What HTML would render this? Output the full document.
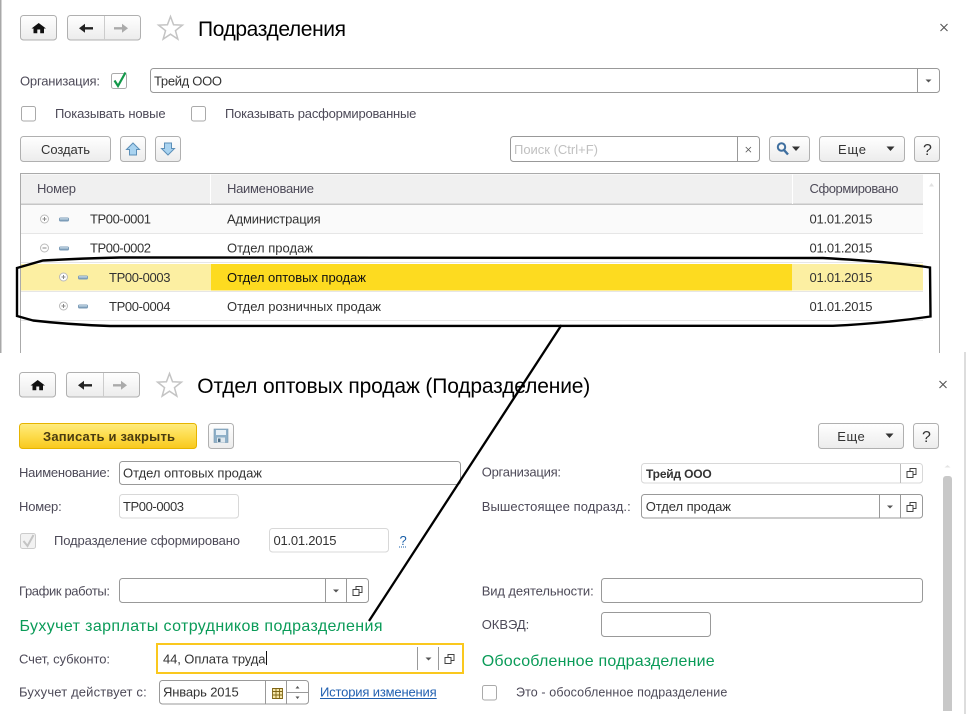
<!DOCTYPE html>
<html lang="ru"><head><meta charset="utf-8"><title>Подразделения</title>
<style>
html,body{margin:0;padding:0;background:#fff;width:966px;height:714px;overflow:hidden}
svg{display:block}
text{font-family:"Liberation Sans",Arial,sans-serif;font-size:13px;fill:#333}
.l{fill:#4d4a58}
.g{fill:#0a9b58;font-size:16px}
.t{fill:#000;font-size:21px}
.q{font-size:16px;fill:#333}
.b{stroke:#b0b0b0;fill:url(#btn)}
.i{stroke:#999;fill:#fff}
.il{stroke:#d8d8d8;fill:#fff}
.d{stroke:#999;stroke-width:1;fill:none}
</style></head><body>
<svg width="966" height="714" viewBox="0 0 966 714" xmlns="http://www.w3.org/2000/svg">
<defs>
<linearGradient id="btn" x1="0" y1="0" x2="0" y2="1"><stop offset="0" stop-color="#fff"/><stop offset="1" stop-color="#ececec"/></linearGradient>
<linearGradient id="yb" x1="0" y1="0" x2="0" y2="1"><stop offset="0" stop-color="#ffec80"/><stop offset=".5" stop-color="#fddc4c"/><stop offset="1" stop-color="#f8c81c"/></linearGradient>
<g id="home"><path d="M18.700 8L26 13.500H24V18.200H20.200V14.500H17.300V18.200H13.500V13.500H11.500Z" fill="#111"/></g>
<g id="star"><path d="M0-12.500L3.060-4.200L11.900-3.860L4.950 1.600L7.350 10.100L0 5.200L-7.350 10.100L-4.950 1.600L-11.900-3.860L-3.060-4.200Z" fill="#fff" stroke="#c4c4c4" stroke-width="1.500"/></g>
<g id="copy"><path d="M-4.500-1.500H1.500V4.500H-4.500Z" fill="none" stroke="#444"/><path d="M-1.500-4.500H4.500V1.500H1.500V-1.500H-1.500Z" fill="#fff" stroke="#444"/></g>
<path id="car" d="M-3-1.500H3L0 1.500Z" fill="#555"/>
<path id="car2" d="M-4-2H4L0 2.500Z" fill="#333"/>
<path id="x" d="M-3.500-3.500L3.500 3.500M3.500-3.500L-3.500 3.500" stroke="#555" stroke-width="1.100" fill="none"/>
<g id="dash"><rect x="0" y="-1.500" width="10" height="4" rx="1.500" fill="#7c9cb8"/><rect x="1" y="-.7" width="8" height="1.200" fill="#c9dbe8"/></g>
<g id="plus"><circle r="4" fill="#fff" stroke="#bbb"/><path d="M-2 0H2M0-2V2" stroke="#888"/></g>
<g id="minus"><circle r="4" fill="#fff" stroke="#bbb"/><path d="M-2 0H2" stroke="#888"/></g>
</defs>

<!-- window edges -->
<rect x="0" y="0" width="1.500" height="353" fill="#a8a8a8"/>
<rect x="964.500" y="352" width="1" height="362" fill="#bbb"/>

<!-- TOP TOOLBAR -->
<rect class="b" x="20.500" y="15.500" width="36" height="24.500" rx="3"/>
<use href="#home" x="20" y="15"/>
<rect class="b" x="67.500" y="15.500" width="73" height="24.500" rx="3"/>
<path d="M104.500 16V40" stroke="#ccc"/>
<path d="M79 28.300L85 23.800V27.100H93V29.500H85V32.800Z" fill="#222"/>
<path d="M128 28.300L122 23.800V27.100H114V29.500H122V32.800Z" fill="#aaa"/>
<use href="#star" x="170.500" y="29"/>
<text class="t" x="198" y="36" textLength="148">Подразделения</text>
<use href="#x" x="944" y="27.500"/>

<text class="l" x="20" y="85.500" textLength="80">Организация:</text>
<rect x="111.500" y="73.500" width="15" height="15" rx="2" fill="#fff" stroke="#aaa"/>
<path d="M114.500 80.500L118 86L125.500 72.500" fill="none" stroke="#13984a" stroke-width="2.200"/>
<rect class="i" x="150.500" y="68.500" width="789" height="24" rx="3"/>
<path class="d" d="M917.500 69V92"/>
<use href="#car" x="928.500" y="81"/>
<text x="154" y="85.500" textLength="68">Трейд ООО</text>

<rect x="21.500" y="106.500" width="14" height="14.500" rx="2" fill="#fff" stroke="#aaa"/>
<text class="l" x="55" y="118" textLength="110.600">Показывать новые</text>
<rect x="191.500" y="106.500" width="14" height="14.500" rx="2" fill="#fff" stroke="#aaa"/>
<text class="l" x="225" y="118" textLength="191.400">Показывать расформированные</text>

<rect class="b" x="20.500" y="136.500" width="90" height="25" rx="3"/>
<text x="41" y="154" textLength="49">Создать</text>
<rect class="b" x="120.500" y="136.500" width="25" height="25" rx="3"/>
<path d="M133 143L139.500 149.500H136.500V155H129.500V149.500H126.500Z" fill="#a9d3f0" stroke="#5c8fb8"/>
<rect class="b" x="155.500" y="136.500" width="25" height="25" rx="3"/>
<path d="M168 155L174.500 148.500H171.500V143H164.500V148.500H161.500Z" fill="#a9d3f0" stroke="#5c8fb8"/>

<rect class="i" x="510.500" y="136.500" width="249" height="25" rx="3"/>
<path class="d" d="M737.500 137V161"/>
<use href="#x" x="748.500" y="149.500" transform="translate(187 37.500) scale(.75)"/>
<text x="514" y="154" textLength="84" style="fill:#c0c0c0">Поиск (Ctrl+F)</text>
<rect class="b" x="769.500" y="136.500" width="40" height="25" rx="3"/>
<circle cx="781.500" cy="147" r="3.700" fill="none" stroke="#3f6f9f" stroke-width="2"/>
<path d="M784 150L788 154.500" stroke="#3f6f9f" stroke-width="2.400"/>
<use href="#car2" x="796" y="148.500"/>
<rect class="b" x="819.500" y="136.500" width="85" height="25" rx="3"/>
<text x="838" y="154" textLength="28">Еще</text>
<use href="#car2" x="890.500" y="148.500"/>
<rect class="b" x="914.500" y="136.500" width="25" height="25" rx="3"/>
<text class="q" x="923" y="155">?</text>

<!-- TABLE -->
<path d="M20.500 353V173.500H939.500V353" fill="none" stroke="#aaa"/>
<rect x="21" y="174.500" width="902" height="29" fill="#f0f0f0"/>
<rect x="21" y="203.500" width="902" height="1.500" fill="#c6c6c6"/>
<rect x="210" y="174" width="1" height="30" fill="#fff"/>
<rect x="792" y="174" width="1" height="30" fill="#fff"/>
<text class="l" x="37" y="193" textLength="39">Номер</text>
<text class="l" x="227" y="193" textLength="87">Наименование</text>
<text class="l" x="809.500" y="193" textLength="89">Сформировано</text>
<path d="M929 186.500L931.500 183L934 186.500Z" fill="#e2e2e2"/>

<rect x="21" y="205" width="902" height="28" fill="#fafafa"/>
<rect x="21" y="233" width="902" height="1" fill="#e6e6e6"/>
<rect x="21" y="262" width="902" height="1" fill="#e6e6e6"/>
<rect x="21" y="264" width="902" height="26.500" fill="#fcefa2"/>
<rect x="211" y="264" width="581" height="26.500" fill="#fddb20"/>
<rect x="21" y="291" width="902" height="1" fill="#e6e6e6"/>
<rect x="21" y="320" width="902" height="1" fill="#e6e6e6"/>

<use href="#plus" x="44.500" y="219"/><use href="#dash" x="59" y="219"/>
<use href="#minus" x="44.500" y="248"/><use href="#dash" x="59" y="248"/>
<use href="#plus" x="63.500" y="277"/><use href="#dash" x="78" y="277"/>
<use href="#plus" x="63.500" y="306"/><use href="#dash" x="78" y="306"/>

<text x="90" y="223.500" textLength="61">ТР00-0001</text>
<text x="90" y="252.500" textLength="61">ТР00-0002</text>
<text x="109" y="282" textLength="61.500">ТР00-0003</text>
<text x="109" y="311" textLength="61.500">ТР00-0004</text>
<text x="227" y="223.500" textLength="93.700">Администрация</text>
<text x="227" y="252.500" textLength="86">Отдел продаж</text>
<text x="227" y="282" textLength="139" style="fill:#111">Отдел оптовых продаж</text>
<text x="227" y="311" textLength="154">Отдел розничных продаж</text>
<text x="809.500" y="223.500" textLength="63">01.01.2015</text>
<text x="809.500" y="252.500" textLength="63">01.01.2015</text>
<text x="809.500" y="282" textLength="63">01.01.2015</text>
<text x="809.500" y="311" textLength="63">01.01.2015</text>

<!-- LOWER TOOLBAR -->
<rect class="b" x="19.500" y="372.500" width="36" height="24.500" rx="3"/>
<use href="#home" x="19" y="372"/>
<rect class="b" x="66.500" y="372.500" width="73" height="24.500" rx="3"/>
<path d="M103.500 373V397" stroke="#ccc"/>
<path d="M78 385.300L84 380.800V384.100H92V386.500H84V389.800Z" fill="#222"/>
<path d="M127 385.300L121 380.800V384.100H113V386.500H121V389.800Z" fill="#aaa"/>
<use href="#star" x="169.500" y="386"/>
<text class="t" x="197.300" y="393" textLength="393">Отдел оптовых продаж (Подразделение)</text>
<use href="#x" x="943" y="384.500"/>

<rect x="19.500" y="423.500" width="177" height="25" rx="3" fill="url(#yb)" stroke="#e6b400"/>
<text x="43" y="441" textLength="132" font-weight="bold" style="fill:#4a3c10">Записать и закрыть</text>
<rect class="b" x="208.500" y="423.500" width="25" height="25" rx="3"/>
<rect x="214" y="429" width="14" height="13.500" fill="#8fb0c8" stroke="#7597b0" stroke-width=".6"/>
<rect x="216" y="430" width="10" height="5" fill="#e8f0f6"/>
<rect x="217" y="437.500" width="8" height="5" fill="#dfe8ee"/>
<rect x="218" y="438.500" width="2.500" height="3.500" fill="#4f6f88"/>
<rect class="b" x="818.500" y="423.500" width="85" height="25" rx="3"/>
<text x="837.300" y="441" textLength="27.400">Еще</text>
<use href="#car2" x="889.500" y="435.500"/>
<rect class="b" x="913.500" y="423.500" width="25" height="25" rx="3"/>
<text class="q" x="922" y="442">?</text>

<!-- LEFT FORM -->
<text class="l" x="19" y="477" textLength="91">Наименование:</text>
<rect class="i" x="119.500" y="461.500" width="341" height="23" rx="3"/>
<text x="123" y="477.500" textLength="139">Отдел оптовых продаж</text>
<text class="l" x="19" y="511" textLength="42.700">Номер:</text>
<rect class="il" x="119.500" y="494.500" width="119" height="23.500" rx="3"/>
<text x="123" y="511" textLength="61">ТР00-0003</text>
<rect x="20.500" y="533.500" width="15" height="15" rx="2" fill="#f2f2f2" stroke="#ccc"/>
<path d="M23.500 541L27.500 546L33.500 535" fill="none" stroke="#c4c4c4" stroke-width="2"/>
<text class="l" x="54" y="545" textLength="186">Подразделение сформировано</text>
<rect class="il" x="269.500" y="528.500" width="119" height="23.500" rx="3"/>
<text x="273.500" y="545" textLength="63">01.01.2015</text>
<text x="399.500" y="545" style="fill:#1a5fa8">?</text>
<path d="M399 547H407" stroke="#1a5fa8" stroke-dasharray="1 1"/>

<text class="l" x="19" y="595.500" textLength="91">График работы:</text>
<rect class="i" x="119.500" y="578.500" width="249" height="24" rx="3"/>
<path class="d" d="M325.500 579V602M346.500 579V602"/>
<use href="#car" x="336" y="591"/>
<use href="#copy" x="357.500" y="591"/>

<text class="g" x="19.500" y="631" textLength="363">Бухучет зарплаты сотрудников подразделения</text>

<text class="l" x="19" y="663.500" textLength="91">Счет, субконто:</text>
<rect x="157" y="644" width="306" height="29" fill="#fff" stroke="#fac81e" stroke-width="2"/>
<path class="d" d="M417.500 647V670M438.500 647V670"/>
<use href="#car" x="428.500" y="659"/>
<use href="#copy" x="449.500" y="659"/>
<text x="163" y="663.500" textLength="102.500">44, Оплата труда</text>
<path d="M266.500 651V665" stroke="#111"/>

<text class="l" x="19" y="696.500" textLength="127.700">Бухучет действует с:</text>
<rect class="i" x="159.500" y="680.500" width="149" height="23.500" rx="3"/>
<path class="d" d="M265.500 681V704M286.500 681V704M287 692.500H309"/>
<text x="163" y="696.500" textLength="75.700">Январь 2015</text>
<path d="M272.500 688.500H282.500V698.500H272.500ZM272.500 691.500H282.500M272.500 695H282.500M276 688.500V698.500M279.500 688.500V698.500" fill="#f5e6a8" stroke="#7f6515" stroke-width=".9"/>
<path d="M295.500 688.500H299.500L297.500 686Z" fill="#555"/>
<path d="M295.500 696.500H299.500L297.500 699Z" fill="#555"/>
<text x="320" y="696.500" textLength="116.700" style="fill:#1f5fb0">История изменения</text>
<path d="M320 698.500H436.700" stroke="#1f5fb0"/>

<!-- RIGHT FORM -->
<text class="l" x="481.700" y="476.500" textLength="79.300">Организация:</text>
<rect class="il" x="641.500" y="463.500" width="281" height="19.500" rx="3"/>
<path d="M900.500 464V483" stroke="#bbb"/>
<use href="#copy" x="911.500" y="473"/>
<text x="646" y="478" textLength="65.700" font-weight="bold" style="font-size:12px">Трейд ООО</text>
<text class="l" x="481.700" y="511" textLength="149">Вышестоящее подразд.:</text>
<rect class="i" x="641.500" y="494.500" width="281" height="23.500" rx="3"/>
<path class="d" d="M879.500 495V518M900.500 495V518"/>
<use href="#car" x="890" y="507"/>
<use href="#copy" x="911.500" y="507"/>
<text x="645.700" y="511" textLength="85.300">Отдел продаж</text>

<text class="l" x="481.700" y="595.500" textLength="112">Вид деятельности:</text>
<rect class="i" x="601.500" y="578.500" width="321" height="24" rx="3"/>
<text class="l" x="481.700" y="629" textLength="47.600">ОКВЭД:</text>
<rect class="i" x="601.500" y="612.500" width="109" height="24" rx="3"/>
<text class="g" x="481.700" y="666" textLength="233">Обособленное подразделение</text>
<rect x="482.500" y="685.500" width="14" height="14.500" rx="2" fill="#fff" stroke="#aaa"/>
<text class="l" x="516" y="696.500" textLength="211.300" style="font-size:12.500px">Это - обособленное подразделение</text>

<!-- scrollbar -->
<path d="M944.500 467.500L947.500 465L950.500 467.500Z" fill="#e4e4e4"/>
<path d="M943 711V479a3 3 0 0 1 3-3h3a3 3 0 0 1 3 3V711Z" fill="#c8c8c8"/>

<!-- hand-drawn annotation -->
<path d="M17 268L43 260.500C70 259 95 258 120 257.500L823 258C860 260 900 263 930 267.500L930.500 316.500C900 321 870 324 833 325.800L110 326C80 325 55 323 33 320.500L17 316Z" fill="none" stroke="#000" stroke-width="2.400"/>
<path d="M561.500 325L369 621" stroke="#000" stroke-width="2.300"/>
</svg>
</body></html>
